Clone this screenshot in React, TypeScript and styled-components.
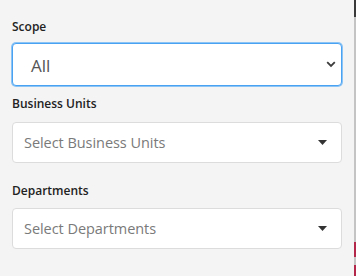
import styled, { createGlobalStyle } from "styled-components";

const GlobalStyle = createGlobalStyle`
  html, body {
    margin: 0;
    padding: 0;
    background: #f4f4f4;
  }
  body {
    font-family: "Open Sans", "Noto Sans", Arial, sans-serif;
  }
`;

const Page = styled.div`
  display: flex;
  width: 356px;
  height: 276px;
  overflow: hidden;
  background: #f4f4f4;
`;

const Panel = styled.div`
  flex: 1;
  display: flex;
  flex-direction: column;
  padding: 19px 12px 0 12px;
`;

const Field = styled.div<{ $gap: number; $spacing: number }>`
  display: flex;
  flex-direction: column;
  gap: ${(p) => p.$gap}px;
  margin-bottom: ${(p) => p.$spacing}px;
`;

const Label = styled.label`
  font-size: 12px;
  line-height: 16px;
  font-weight: 600;
  color: #222;
`;

const Select = styled.div<{ $focused?: boolean; $large?: boolean }>`
  display: flex;
  align-items: center;
  justify-content: space-between;
  box-sizing: border-box;
  width: 330px;
  height: ${(p) => (p.$large ? 43 : 41)}px;
  padding: ${(p) => (p.$large ? "0 5px 0 18px" : "0 14px 0 11px")};
  background: #fff;
  border: 1px solid ${(p) => (p.$focused ? "#4aa3f2" : "#dcdcdc")};
  box-shadow: ${(p) => (p.$focused ? "0 0 0 1px #8cc4f5" : "none")};
  border-radius: 4px;
`;

const Value = styled.span`
  font-size: 17px;
  color: #555;
  padding-top: 1px;
`;

const Placeholder = styled.span`
  font-size: 14.5px;
  color: #7a7a7a;
  letter-spacing: -0.05px;
`;

const ScrollStrip = styled.div`
  width: 2px;
  display: flex;
  flex-direction: column;
`;

const StripPart = styled.div<{ $h: number; $c: string }>`
  height: ${(p) => p.$h}px;
  background: ${(p) => p.$c};
  flex-shrink: 0;
`;

function Chevron() {
  return (
    <svg width="10" height="7" viewBox="0 0 10 7">
      <path d="M1.2 1.2 L5 5 L8.8 1.2" fill="none" stroke="#3c3c3c" strokeWidth="1.8" />
    </svg>
  );
}

function Caret() {
  return (
    <svg width="9" height="5" viewBox="0 0 9 5">
      <path d="M0 0 H9 L4.5 5 Z" fill="#333" />
    </svg>
  );
}

export default function App() {
  return (
    <>
      <GlobalStyle />
      <Page>
        <Panel>
          <Field $gap={8} $spacing={10}>
            <Label>Scope</Label>
            <Select $focused $large>
              <Value>All</Value>
              <Chevron />
            </Select>
          </Field>
          <Field $gap={10} $spacing={20}>
            <Label>Business Units</Label>
            <Select>
              <Placeholder>Select Business Units</Placeholder>
              <Caret />
            </Select>
          </Field>
          <Field $gap={9} $spacing={0}>
            <Label>Departments</Label>
            <Select>
              <Placeholder>Select Departments</Placeholder>
              <Caret />
            </Select>
          </Field>
        </Panel>
        <ScrollStrip>
          <StripPart $h={17} $c="#3a3a3a" />
          <StripPart $h={225} $c="#c4c4c4" />
          <StripPart $h={15} $c="#b3284a" />
          <StripPart $h={8} $c="#c4c4c4" />
          <StripPart $h={11} $c="#b3284a" />
        </ScrollStrip>
      </Page>
    </>
  );
}
